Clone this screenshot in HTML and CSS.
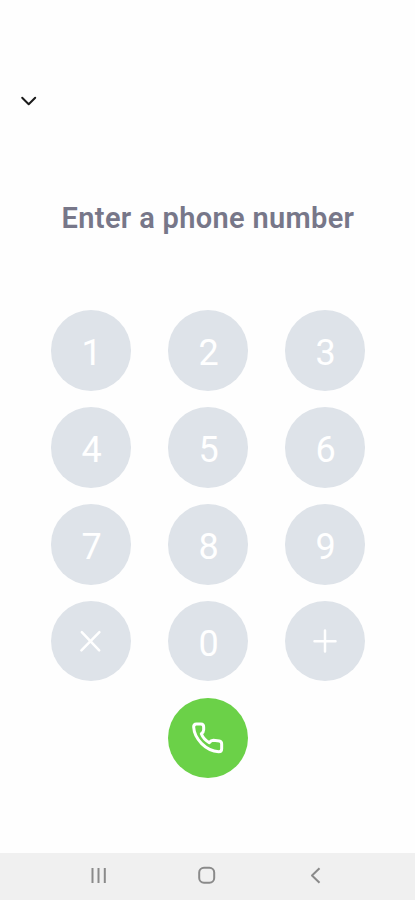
FILE: index.html
```html
<!DOCTYPE html>
<html lang="en">
<head>
<meta charset="utf-8">
<meta name="viewport" content="width=device-width, initial-scale=1">
<title>Phone dialer</title>
<link rel="stylesheet" href="styles.css">
</head>
<body>
<main class="screen">
  <header class="top">
    <button class="close" aria-label="Close"><svg width="18" height="12" viewBox="0 0 18 12"><path d="M2.2 2.7 8.7 9.2l6.5-6.5"/></svg></button>
  </header>
  <h1 class="title">Enter a phone number</h1>
  <section class="pad">
    <button class="key">1</button>
    <button class="key">2</button>
    <button class="key">3</button>
    <button class="key">4</button>
    <button class="key">5</button>
    <button class="key">6</button>
    <button class="key">7</button>
    <button class="key">8</button>
    <button class="key">9</button>
    <button class="key symbol" aria-label="Delete"><svg width="26" height="26" viewBox="0 0 26 26"><path d="M3.8 4.2l17.4 18.2M21.4 4.2 3.4 22.4"/></svg></button>
    <button class="key">0</button>
    <button class="key symbol" aria-label="Plus"><svg width="26" height="26" viewBox="0 0 26 26"><path d="M13 2.5v21M2.5 13.3h21"/></svg></button>
    <button class="key call" aria-label="Call"><svg width="40" height="40" viewBox="85 85 120 120"><path d="M110 103H124Q132 103 132 112V120Q132 127 125 132Q131 148 149 159Q154 152 161 152L179 154Q186 155 186 163V177Q186 186 177 186C139 184 104 148 102 112Q102 103 110 103Z"/></svg></button>
  </section>
  <nav class="navbar">
    <svg width="18" height="18" viewBox="0 0 18 18"><path d="M2.5 2v15M8.5 2v15M14.8 2v15"/></svg>
    <svg width="18" height="18" viewBox="0 0 18 18"><rect x="1.2" y="1.7" width="15" height="15" rx="4.8"/></svg>
    <svg width="18" height="18" viewBox="0 0 18 18"><path d="M13.5 2.2 6 9.5l7.5 7.3"/></svg>
  </nav>
</main>
</body>
</html>
```
FILE: styles.css
```css
* { box-sizing: border-box; }
body { margin: 0; background: #fefefe; font-family: Roboto, sans-serif; }
button { border: 0; padding: 0; background: none; font: inherit; }
svg { display: block; fill: none; stroke-linecap: round; stroke-linejoin: round; }
.screen { display: flex; flex-direction: column; height: 900px; }
.top { display: flex; align-items: flex-start; height: 198px; padding: 94.5px 0 0 20px; }
.close svg { stroke: #1b1b1b; stroke-width: 2; }
.title {
  margin: 0;
  height: 40px;
  padding-left: 1px;
  line-height: 41px;
  text-align: center;
  font-size: 29px;
  font-weight: 600;
  letter-spacing: 0.33px;
  color: #777789;
  white-space: nowrap;
}
.pad {
  display: grid;
  grid-template-columns: repeat(3, 80.5px);
  grid-auto-rows: 80.5px;
  column-gap: 36.5px;
  row-gap: 16.4px;
  justify-content: center;
  margin-top: 72.3px;
  padding-left: 1px;
}
.key {
  display: flex;
  align-items: center;
  justify-content: center;
  border-radius: 50%;
  background: #dee3e9;
  color: #fff;
  font-size: 36px;
  line-height: 42px;
  padding: 5px 0 0 1px;
}
.symbol { padding: 0; }
.symbol svg { stroke: #fff; stroke-width: 2.5; }
.call { grid-column: 2; padding: 0; background: #6bd148; }
.call svg { stroke: #fff; stroke-width: 9; }
.navbar {
  display: flex;
  justify-content: space-between;
  align-items: center;
  height: 47.5px;
  margin-top: auto;
  padding: 0 91px 2px 90px;
  background: #f0f0f0;
}
.navbar svg { stroke: #8a8a8a; stroke-width: 2; stroke-linecap: butt; }
```
